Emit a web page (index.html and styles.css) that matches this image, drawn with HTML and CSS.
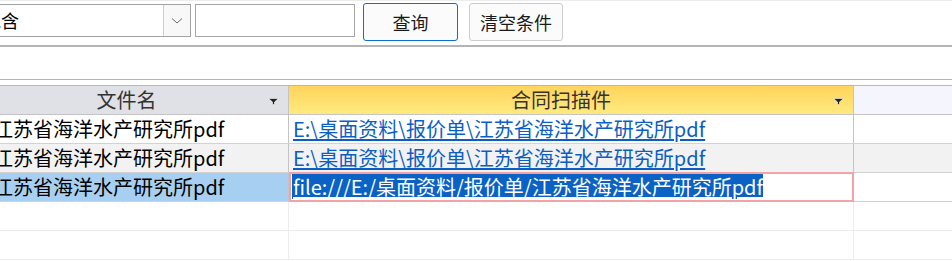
FILE: index.html
```html
<!DOCTYPE html>
<html lang="zh">
<head>
<meta charset="utf-8">
<link rel="stylesheet" href="styles.css">
</head>
<body>
<div class="page">
  <div class="toolbar">
    <div class="combo">
      <span class="combo-text">包含</span>
      <span class="combo-btn">
        <svg width="12" height="8" viewBox="0 0 12 8"><path d="M1 1.5 L6 6 L11 1.5" fill="none" stroke="#6b6b6b" stroke-width="1"/></svg>
      </span>
    </div>
    <div class="textbox"></div>
    <button class="btn btn-focus">查询</button>
    <button class="btn">清空条件</button>
  </div>
  <div class="spacer"></div>
  <div class="grid">
    <div class="row head">
      <div class="cell c1 hd-gray"><span class="hd-label">文件名</span><span class="arrow"><svg width="11" height="7" viewBox="0 0 11 7"><path d="M0.5 0.5 H10.5 L6.5 4 V6.5 H4.5 V4 Z" fill="#222" stroke="#fff" stroke-width="0.6"/></svg></span></div>
      <div class="cell c2 hd-yellow"><span class="hd-label">合同扫描件</span><span class="arrow"><svg width="11" height="7" viewBox="0 0 11 7"><path d="M0.5 0.5 H10.5 L6.5 4 V6.5 H4.5 V4 Z" fill="#222" stroke="#fff" stroke-width="0.6"/></svg></span></div>
      <div class="cell c3 hd-blank"></div>
    </div>
    <div class="row">
      <div class="cell c1 txt">江苏省海洋水产研究所pdf</div>
      <div class="cell c2 txt"><a class="link">E:\桌面资料\报价单\江苏省海洋水产研究所pdf</a></div>
      <div class="cell c3"></div>
    </div>
    <div class="row alt">
      <div class="cell c1 txt">江苏省海洋水产研究所pdf</div>
      <div class="cell c2 txt"><a class="link">E:\桌面资料\报价单\江苏省海洋水产研究所pdf</a></div>
      <div class="cell c3"></div>
    </div>
    <div class="row">
      <div class="cell c1 txt sel-row">江苏省海洋水产研究所pdf</div>
      <div class="cell c2 txt editing"><span class="sel-text">file:///E:/桌面资料/报价单/江苏省海洋水产研究所pdf</span></div>
      <div class="cell c3"></div>
    </div>
    <div class="row empty">
      <div class="cell c1"></div>
      <div class="cell c2"></div>
      <div class="cell c3"></div>
    </div>
    <div class="row empty">
      <div class="cell c1"></div>
      <div class="cell c2"></div>
      <div class="cell c3"></div>
    </div>
  </div>
</div>
</body>
</html>
```

FILE: styles.css
```css
html, body {
  margin: 0;
  padding: 0;
  background: #fff;
  overflow: hidden;
}
body {
  font-family: "Noto Sans CJK SC", "Noto Sans", sans-serif;
  color: #000;
}
.page {
  width: 980px;
}
.toolbar {
  height: 42px;
  border-top: 1px solid #ececec;
  border-bottom: 2px solid #b4b4b4;
  padding-top: 2px;
  box-sizing: border-box;
  height: 47px;
  display: flex;
  align-items: flex-start;
  margin-left: -24px;
}
.combo {
  margin-top: 1px;
  width: 215px;
  height: 33px;
  box-sizing: border-box;
  border: 1px solid #a3a3a3;
  display: flex;
  align-items: stretch;
}
.combo-text {
  flex: 1;
  font-size: 18px;
  line-height: 31px;
  padding-left: 6px;
  white-space: nowrap;
}
.combo-btn {
  width: 26px;
  background: #f8f8f8;
  border-left: 1px solid #cfcfcf;
  display: flex;
  align-items: center;
  justify-content: center;
}
.textbox {
  margin-top: 1px;
  margin-left: 4px;
  width: 160px;
  height: 33px;
  box-sizing: border-box;
  border: 1px solid #a6a6a6;
}
.btn {
  margin-left: 8px;
  width: 95px;
  height: 38px;
  box-sizing: border-box;
  border: 1px solid #cccccc;
  border-radius: 3px;
  background: #fbfbfb;
  font-family: "Noto Sans CJK SC", sans-serif;
  font-size: 18px;
  color: #1a1a1a;
  padding: 0;
  line-height: 36px;
}
.btn + .btn {
  margin-left: 11px;
  width: 94px;
}
.btn-focus {
  border: 1px solid #0a6fcf;
}
.spacer {
  height: 32px;
  border-bottom: 1px solid #b4b4b4;
  margin-bottom: 5px;
}
.grid {
  margin-left: -15px;
  font-size: 20px;
}
.row {
  display: flex;
  height: 29px;
  box-sizing: border-box;
  border-bottom: 1px solid #d2d2d2;
}
.row.head {
  height: 30px;
  border-top: 1px solid #b8b8b8;
  border-bottom: 1px solid #c4c4c4;
}
.row.alt { background: #f2f2f2; }
.row.empty { border-bottom-color: #ececec; }
.cell {
  box-sizing: border-box;
  height: 100%;
}
.c1 {
  width: 304px;
  border-right: 1px solid #c4c4c4;
}
.c2 {
  width: 565px;
  border-right: 1px solid #c4c4c4;
}
.c3 {
  flex: 1;
}
.row.empty .c1, .row.empty .c2 {
  border-right-color: #ececec;
}
.hd-gray { background: #dfe1e6; }
.hd-yellow { background: linear-gradient(#ffd45c, #ffea80); }
.hd-blank { background: #f5f5fe; }
.head .cell {
  display: flex;
  align-items: center;
  color: #333;
}
.hd-label {
  flex: 1;
  text-align: center;
  line-height: 28px;
}
.arrow {
  width: 20px;
  display: flex;
  justify-content: flex-start;
  align-items: center;
  padding-top: 2px;
}
.txt {
  line-height: 28px;
  white-space: nowrap;
  overflow: hidden;
}
.c1.txt { padding-left: 8px; }
.c2.txt { padding-left: 4px; }
.link {
  color: #0b5ec4;
  text-decoration: underline;
  text-underline-offset: 2px;
}
.sel-row { background: #a7cff1; }
.editing {
  border: 2px solid #f3a3a6;
  margin-top: -1px;
  height: 30px;
  padding-left: 1px !important;
  background: #fff;
  line-height: 26px;
}
.sel-text {
  display: inline-block;
  background: #0a62c4;
  color: #fff;
  text-decoration: underline;
  text-underline-offset: 2px;
  line-height: 25px;
  padding-left: 1px;
}
```
